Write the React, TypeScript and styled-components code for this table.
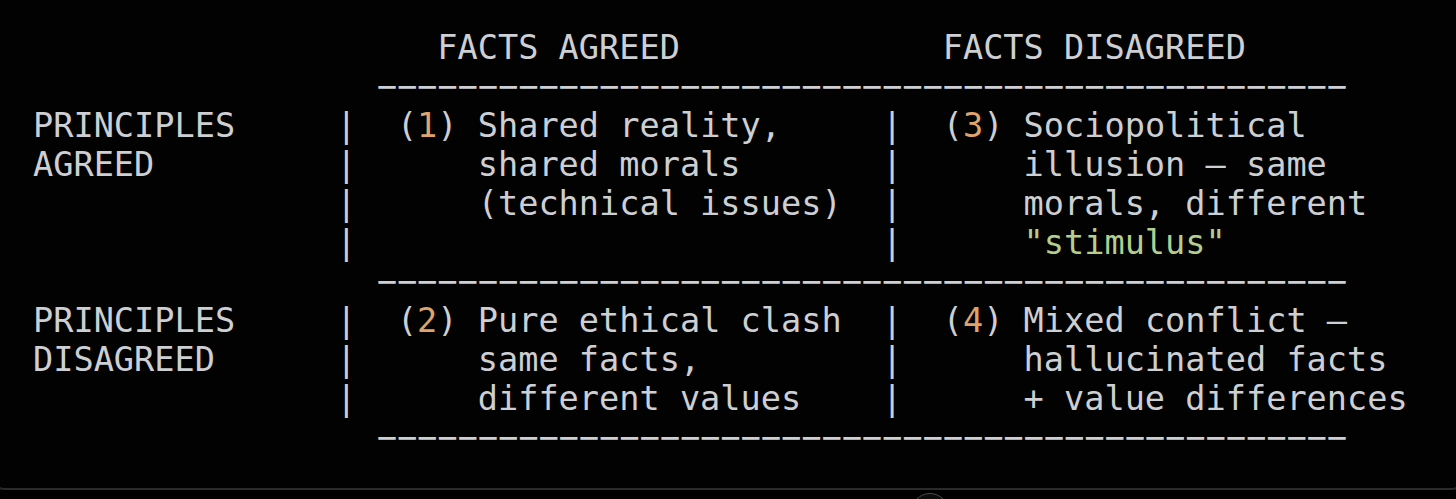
import React from "react";
import styled, { createGlobalStyle } from "styled-components";
import { ArrowDown } from "lucide-react";

const GlobalStyle = createGlobalStyle`
  html, body {
    margin: 0;
    padding: 0;
    background: #000;
    overflow: hidden;
  }
`;

const Page = styled.div`
  position: relative;
  width: 100vw;
  height: 100vh;
  overflow: hidden;
  background: #000;
`;

const CodeBlock = styled.div`
  margin: 0 -6px;
  padding: 28px 0 31px 37px;
  background: #020202;
  border: 2px solid #2a2a2a;
  border-top: none;
  border-radius: 0 0 10px 10px;
`;

const Pre = styled.pre`
  margin: 0;
  font-family: "DejaVu Sans Mono", "Liberation Mono", monospace;
  font-size: 33.6px;
  line-height: 39px;
  color: #cdcfd3;
  white-space: pre;
`;

const Num = styled.span`
  color: #dfa36c;
`;

const Str = styled.span`
  color: #b4cf8d;
`;

const ScrollButton = styled.button`
  position: absolute;
  left: 911px;
  top: 493px;
  width: 38px;
  height: 38px;
  border-radius: 50%;
  border: 1.5px solid #4a4a4a;
  background: #0c0c0c;
  color: #bbb;
  display: flex;
  align-items: center;
  justify-content: center;
  padding: 0;
`;

const sp = (n: number) => " ".repeat(n);
const rule = sp(17) + "−".repeat(48);

export default function App() {
  return (
    <Page>
      <GlobalStyle />
      <CodeBlock>
        <Pre>
          {sp(20) + "FACTS AGREED" + sp(13) + "FACTS DISAGREED"}
          {"\n"}
          {rule}
          {"\n"}
          {"PRINCIPLES" + sp(5) + "|" + sp(2) + "("}
          <Num>1</Num>
          {") Shared reality," + sp(5) + "|" + sp(2) + "("}
          <Num>3</Num>
          {") Sociopolitical"}
          {"\n"}
          {"AGREED" + sp(9) + "|" + sp(6) + "shared morals" + sp(7) + "|" + sp(6) + "illusion — same"}
          {"\n"}
          {sp(15) + "|" + sp(6) + "(technical issues)" + sp(2) + "|" + sp(6) + "morals, different"}
          {"\n"}
          {sp(15) + "|" + sp(26) + "|" + sp(6)}
          <Str>"stimulus"</Str>
          {"\n"}
          {rule}
          {"\n"}
          {"PRINCIPLES" + sp(5) + "|" + sp(2) + "("}
          <Num>2</Num>
          {") Pure ethical clash" + sp(2) + "|" + sp(2) + "("}
          <Num>4</Num>
          {") Mixed conflict —"}
          {"\n"}
          {"DISAGREED" + sp(6) + "|" + sp(6) + "same facts," + sp(9) + "|" + sp(6) + "hallucinated facts"}
          {"\n"}
          {sp(15) + "|" + sp(6) + "different values" + sp(4) + "|" + sp(6) + "+ value differences"}
          {"\n"}
          {rule}
        </Pre>
      </CodeBlock>
      <ScrollButton aria-label="Scroll to bottom">
        <ArrowDown size={18} />
      </ScrollButton>
    </Page>
  );
}
